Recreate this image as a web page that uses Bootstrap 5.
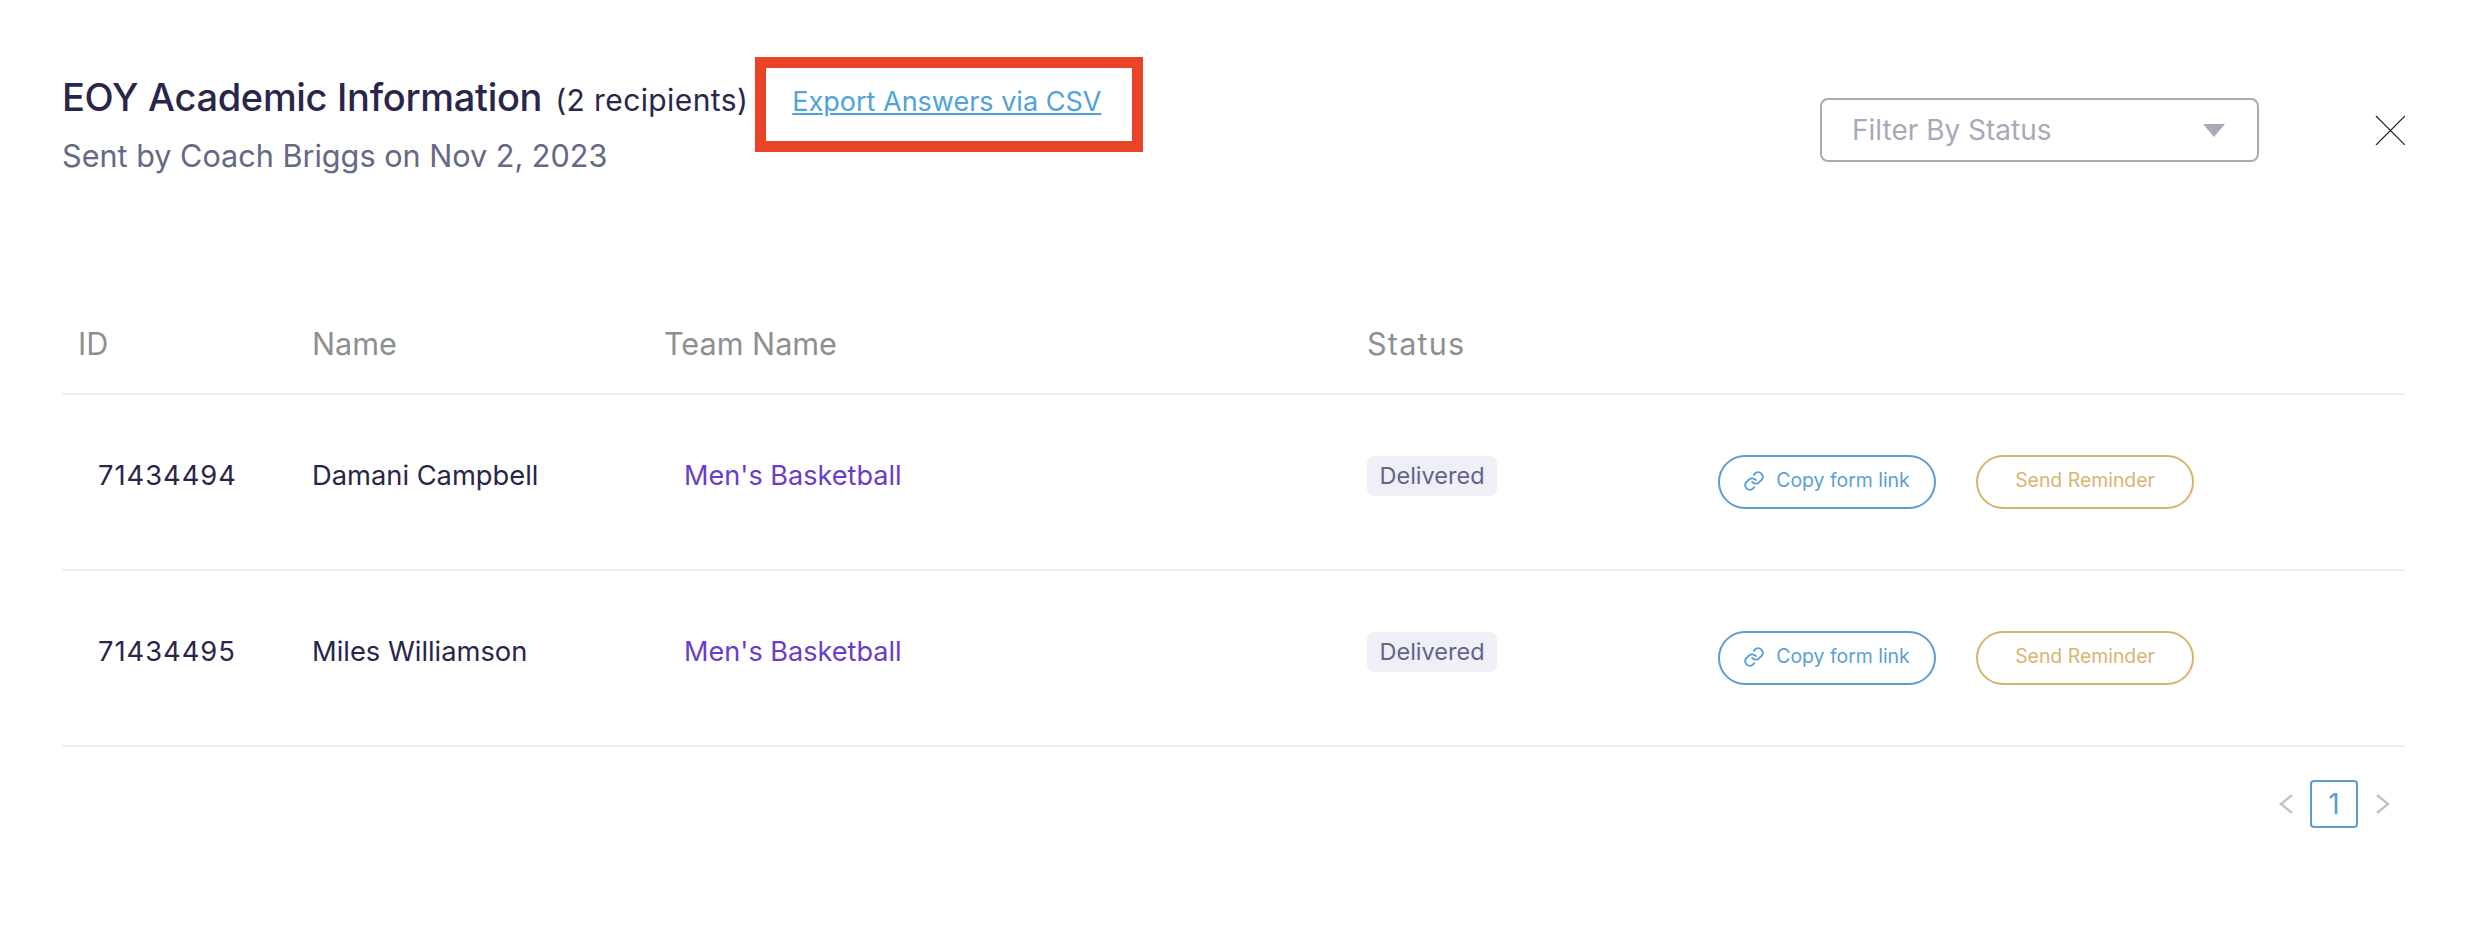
<!doctype html>
<html lang="en"><head><meta charset="utf-8"><title>EOY Academic Information</title>
<link href="https://cdn.jsdelivr.net/npm/bootstrap@5.3.0/dist/css/bootstrap.min.css" rel="stylesheet">
<style>
html,body{height:100%;background:#fff}
body{font-family:Inter,"Liberation Sans",sans-serif;color:#29264a;overflow:hidden}
.sheet{padding:57px 73px 0 62px;height:946px}
.head-row{height:266px;align-items:flex-start}
.title-block{padding-top:16px}
.main-title{font-size:38px;font-weight:500;line-height:48px;margin:0;letter-spacing:-.3px}
.recip{font-size:30px;margin-left:13px;line-height:48px;letter-spacing:.4px}
.sent{font-size:30.6px;color:#666985;line-height:36px;margin-top:14px}
.red-box{border:11px solid #e94427;width:388px;height:95px;margin-left:7px;padding-left:26px;line-height:67px;font-size:27px;flex:none}
.red-box a{color:#4fa3d9}
.filter{width:439px;height:64px;margin-top:41px;border:2px solid #aaaab9;border-radius:8px;padding:0 30px;color:#a9a9b8;font-size:28px}
.caret-tri{width:0;height:0;border-left:11px solid transparent;border-right:11px solid transparent;border-top:13px solid #a9a9b8;margin-right:2px}
.close-x{margin-top:58px;margin-left:116px;width:30px;height:30px;flex:none}
.data-table{table-layout:fixed;width:2343px;margin:0}
.data-table th,.data-table td{border-bottom:2px solid #eeeeef;padding:0;vertical-align:middle;background:transparent}
.data-table th{font-size:30.6px;font-weight:400;color:#8d9091;height:71px;padding-left:16px;padding-top:2px;vertical-align:top;line-height:37px}
.data-table td{height:176px;font-size:27.3px;color:#29264a}
.data-table th.c-name,.data-table td.c-name{padding-left:0}
.data-table th.c-status{letter-spacing:1.2px}
.data-table td.c-id-cell{padding-left:36px;letter-spacing:1px}
.data-table td.team{color:#6b3cc6;padding-left:20px;font-size:27.1px}
.cell-up{position:relative;top:-6px}
.stat-pill{background:#f0eff6;color:#62658a;font-size:23.5px;border-radius:7px;padding:4px 12.5px;display:inline-block;line-height:32px;top:-7px}
.pill-btn{width:218px;height:54px;border-radius:27px;background:#fff;font-size:19.4px;padding:0 0 2px}
.pill-blue{border:2px solid #5b9dd0;color:#5a9fd6}
.pill-blue svg{margin-right:3px;margin-left:-1px}
.pill-gold{border:2px solid #d9b36c;color:#dab46e}
.pill-pair{gap:40px}
.pager{margin-top:33px;padding-right:14px;gap:16px}
.pg-num{width:48px;height:48px;border:2px solid #5b9dd0;border-radius:4px;color:#5a9fd6;font-size:28px;margin-right:1px}
</style></head>
<body>
<div class="sheet">
  <div class="d-flex head-row">
    <div class="title-block flex-none">
      <div class="d-flex align-items-baseline"><h1 class="main-title">EOY Academic Information</h1><span class="recip">(2 recipients)</span></div>
      <div class="sent">Sent by Coach Briggs on Nov 2, 2023</div>
    </div>
    <div class="red-box"><a href="#">Export Answers via CSV</a></div>
    <div class="d-flex align-items-center justify-content-between filter ms-auto"><span>Filter By Status</span><span class="caret-tri"></span></div>
    <svg class="close-x" viewBox="0 0 30 30"><path d="M1 1 30 30M30 1 1 30" stroke="#222" stroke-width="1.2" fill="none"/></svg>
  </div>
  <table class="table data-table">
    <colgroup><col style="width:250px"><col style="width:352px"><col style="width:703px"><col style="width:351px"><col></colgroup>
    <thead><tr><th>ID</th><th class="c-name">Name</th><th class="c-name">Team Name</th><th class="c-name c-status">Status</th><th></th></tr></thead>
    <tbody>
      <tr><td class="c-id-cell"><span class="cell-up d-inline-block">71434494</span></td><td class="c-name"><span class="cell-up d-inline-block">Damani Campbell</span></td><td class="team"><span class="cell-up d-inline-block">Men's Basketball</span></td><td class="c-name"><span class="stat-pill cell-up">Delivered</span></td>
        <td><div class="d-flex pill-pair">
          <button class="btn pill-btn pill-blue d-flex align-items-center justify-content-center gap-2"><svg width="22" height="22" viewBox="0 0 24 24" fill="none" stroke="#5a9fd6" stroke-width="2" stroke-linecap="round"><path d="M10 13a5 5 0 0 0 7.5.5l3-3a5 5 0 0 0-7-7l-1.7 1.7"/><path d="M14 11a5 5 0 0 0-7.5-.5l-3 3a5 5 0 0 0 7 7l1.7-1.7"/></svg>Copy form link</button>
          <button class="btn pill-btn pill-gold">Send Reminder</button></div></td></tr>
      <tr><td class="c-id-cell"><span class="cell-up d-inline-block">71434495</span></td><td class="c-name"><span class="cell-up d-inline-block">Miles Williamson</span></td><td class="team"><span class="cell-up d-inline-block">Men's Basketball</span></td><td class="c-name"><span class="stat-pill cell-up">Delivered</span></td>
        <td><div class="d-flex pill-pair">
          <button class="btn pill-btn pill-blue d-flex align-items-center justify-content-center gap-2"><svg width="22" height="22" viewBox="0 0 24 24" fill="none" stroke="#5a9fd6" stroke-width="2" stroke-linecap="round"><path d="M10 13a5 5 0 0 0 7.5.5l3-3a5 5 0 0 0-7-7l-1.7 1.7"/><path d="M14 11a5 5 0 0 0-7.5-.5l-3 3a5 5 0 0 0 7 7l1.7-1.7"/></svg>Copy form link</button>
          <button class="btn pill-btn pill-gold">Send Reminder</button></div></td></tr>
    </tbody>
  </table>
  <div class="d-flex justify-content-end align-items-center pager">
    <svg width="16" height="22" viewBox="0 0 16 22"><path d="M14 2 3 11l11 9" fill="none" stroke="#c4c4c4" stroke-width="2.5"/></svg>
    <div class="pg-num d-flex align-items-center justify-content-center">1</div>
    <svg width="16" height="22" viewBox="0 0 16 22"><path d="M2 2l11 9-11 9" fill="none" stroke="#c4c4c4" stroke-width="2.5"/></svg>
  </div>
</div>
</body></html>
